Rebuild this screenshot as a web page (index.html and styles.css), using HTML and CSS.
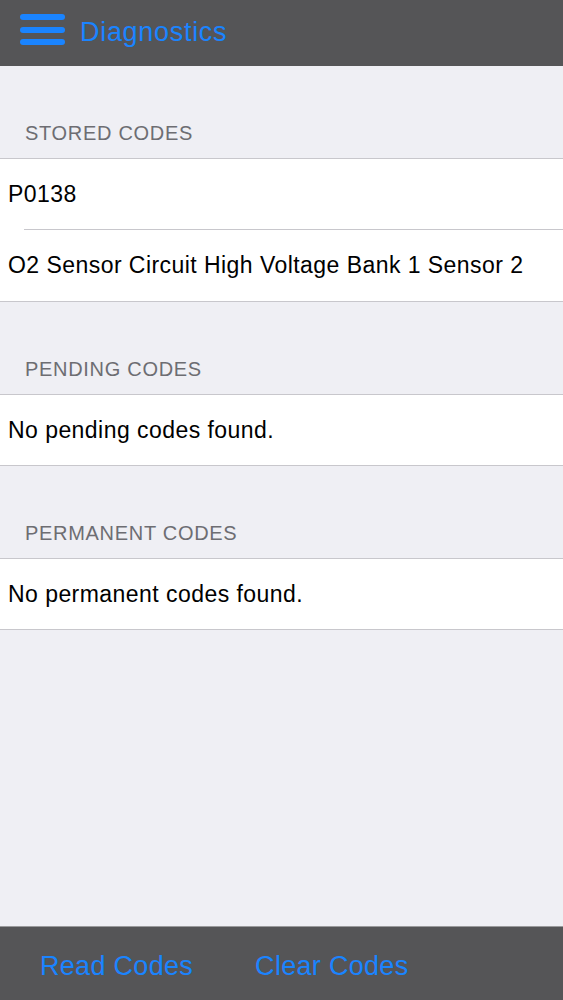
FILE: index.html
```html
<!DOCTYPE html>
<html lang="en">
<head>
  <meta charset="UTF-8" />
  <meta name="viewport" content="width=device-width, initial-scale=1.0"/>
  <title>Diagnostics</title>
  <link rel="stylesheet" href="styles.css">
</head>
<body>
  <div class="screen">
    <div class="topbar">
      <span class="menu">
        <span class="bar"></span>
        <span class="bar"></span>
        <span class="bar"></span>
      </span>
      <span class="title">Diagnostics</span>
    </div>

    <div class="content">
      <div class="section-label">STORED CODES</div>
      <div class="group">
        <div class="row">P0138</div>
        <div class="row">O2 Sensor Circuit High Voltage Bank 1 Sensor 2</div>
      </div>

      <div class="section-label">PENDING CODES</div>
      <div class="group">
        <div class="row">No pending codes found.</div>
      </div>

      <div class="section-label">PERMANENT CODES</div>
      <div class="group">
        <div class="row">No permanent codes found.</div>
      </div>
    </div>

    <div class="bottombar">
      <span class="action">Read Codes</span>
      <span class="action">Clear Codes</span>
    </div>
  </div>
</body>
</html>
```

FILE: styles.css
```css
body {
  margin: 0;
  font-family: 'Liberation Sans', Arial, sans-serif;
  background-color: #efeff4;
}
.screen {
  display: flex;
  flex-direction: column;
  height: 1000px;
}
.topbar {
  height: 66px;
  background: #555557;
  display: flex;
  align-items: center;
  padding-left: 20px;
  gap: 15px;
}
.menu {
  display: flex;
  flex-direction: column;
  gap: 6.5px;
  width: 45px;
  margin-top: -7px;
}
.bar {
  height: 6px;
  background: #1a84ff;
  border-radius: 3px;
}
.title {
  color: #1a84ff;
  font-size: 27px;
  letter-spacing: 0.7px;
  margin-top: -2px;
}
.content {
  flex: 1;
}
.section-label {
  padding: 55px 25px 13px;
  line-height: 24px;
  font-size: 20px;
  letter-spacing: 0.7px;
  color: #6d6d72;
}
.group {
  background: #fff;
  border-top: 1px solid #c8c7cc;
  border-bottom: 1px solid #c8c7cc;
}
.row {
  height: 70px;
  line-height: 70px;
  padding-left: 8px;
  font-size: 23px;
  letter-spacing: 0.45px;
  color: #000;
}
.row + .row {
  height: 72px;
  line-height: 72px;
  background: linear-gradient(#c8c7cc, #c8c7cc) 24px 0 / 100% 1px no-repeat;
}
.bottombar {
  height: 74px;
  box-sizing: border-box;
  background: #555557;
  border-top: 1px solid #9a9a9c;
  display: flex;
  align-items: center;
  padding: 5px 0 0 40px;
  gap: 62px;
}
.action {
  color: #1a84ff;
  font-size: 27px;
  letter-spacing: 0.3px;
}
```
